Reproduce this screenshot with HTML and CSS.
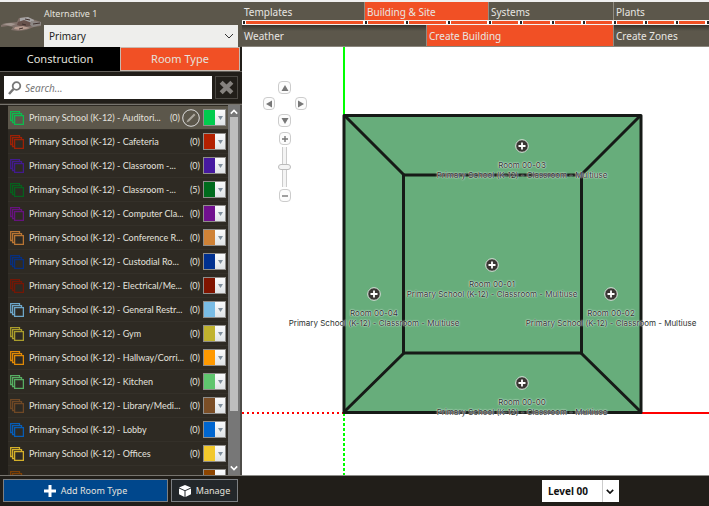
FILE: index.html
```
<!DOCTYPE html>
<html lang="en">
<head>
<meta charset="utf-8">
<title>Create Building</title>
<link rel="stylesheet" href="styles.css">
</head>
<body>
<svg width="0" height="0" class="defs" aria-hidden="true">
  <symbol id="stack" viewBox="0 0 14 14">
    <g fill="none" stroke="currentColor" stroke-width="1.300"><path d="M2.500 9.500H.7V.7h8.800v1.800"/><path d="M4.500 11.500H2.600V2.600h8.900v1.900"/><rect x="4.600" y="4.600" width="8.800" height="8.800"/></g>
  </symbol>
  <symbol id="chevron" viewBox="0 0 10 6"><path d="M1 1l4 4 4-4" fill="none" stroke="currentColor"/></symbol>
  <symbol id="add" viewBox="0 0 14 14"><circle cx="7" cy="7" r="6.300" fill="#3a3633" stroke="#dfe8e1" stroke-width="1"/><path d="M7 3.500v7M3.500 7h7" stroke="#fff" stroke-width="1.800"/></symbol>
</svg>
<aside class="sidebar">
  <header class="project">
    <svg class="thumb" viewBox="0 0 44 44" aria-hidden="true">
      <path d="M1 23l6-2 10-1 2-4 8-1 8 3 6 2v4l-7 1-8 3-8 1-7-1 2-3-5-1-7 1z" fill="#82726b"/>
      <path d="M20 16l8-1 6 3-1 3-13-1z" fill="#a6a4a4"/><path d="M18 20l6-2 8 3-1 3-8 1-6-2z" fill="#67514b"/>
      <path d="M15 25l8-1 7 2-9 2-7-1z" fill="#b89c90"/><path d="M2 22l9-1 5 1-5 2z" fill="#a39790"/>
      <path d="M31 19l10 1v3l-8 2-3-2z" fill="#8c8784"/><path d="M33 22l7-1M22 22l4 1M25 17l5 1M19 27l4-1" stroke="#3f302d"/>
    </svg>
    <div class="alt">
      <label for="alt">Alternative 1</label>
      <div class="pick"><select id="alt"><option>Primary</option></select><svg><use href="#chevron"/></svg></div>
    </div>
  </header>
  <div class="tabs">
    <button type="button">Construction</button>
    <button type="button" class="on">Room Type</button>
  </div>
  <form class="search">
    <div class="field">
      <svg viewBox="0 0 14 14" aria-hidden="true"><circle cx="8.500" cy="5" r="3.800" fill="none" stroke="#777" stroke-width="1.800"/><path d="M5.500 8L1 13" stroke="#777" stroke-width="2.500"/></svg>
      <input type="text" placeholder="Search..." aria-label="Search">
    </div>
    <button type="reset" aria-label="Clear"><svg viewBox="0 0 14 14"><path d="M2 2l10 10M12 2L2 12" stroke="#85827e" stroke-width="4"/></svg></button>
  </form>
  <div class="listwrap">
    <ul class="list" id="rooms"></ul>
    <div class="scroll" aria-hidden="true"><svg class="up"><use href="#chevron"/></svg><div class="bar"></div><svg><use href="#chevron"/></svg></div>
  </div>
  <footer class="actions">
    <button type="button" class="addtype"><svg viewBox="0 0 12 12"><path d="M6 0v12M0 6h12" stroke="#fff" stroke-width="3"/></svg>Add Room Type</button>
    <button type="button" class="manage"><svg viewBox="0 0 12 12"><path d="M6 0l6 2.500L6 5.300 0 2.500zM0 3.600l5.500 2.500V12L0 9.300zM12 3.600L6.500 6.100V12L12 9.300z" fill="#fff"/></svg>Manage</button>
  </footer>
</aside>
<main class="main">
  <nav class="nav top">
    <a href="#">Templates</a><a href="#" class="on">Building &amp; Site</a><a href="#">Systems</a><a href="#">Plants</a>
  </nav>
  <div class="rail" aria-hidden="true">
    <div><i></i></div><div><i></i><i></i><i></i></div><div><i></i><i></i><i></i><i></i></div><div><i></i><i></i><i></i><i></i></div>
  </div>
  <nav class="nav sub">
    <a href="#">Weather</a><a href="#" class="on">Create Building</a><a href="#">Create Zones</a>
  </nav>
  <section class="canvas">
    <svg class="plan" width="467" height="428" aria-hidden="true">
      <path d="M102 0V68" stroke="#0f0" stroke-width="2"/>
      <path d="M102 366V3000" stroke="#0f0" stroke-width="2" stroke-dasharray="3 2"/>
      <path d="M102 366H-1" stroke="red" stroke-width="2" stroke-dasharray="2 3"/>
      <path d="M399 366H3000" stroke="red" stroke-width="2"/>
      <rect x="102" y="68" width="297" height="297" fill="#67ad7b"/>
      <g fill="none" stroke="#161a17" stroke-width="3" stroke-linejoin="round"><rect x="102" y="68.500" width="297" height="297"/><rect x="161.500" y="128" width="178" height="178"/><path d="M102 68l60 60M399 68l-60 60M102 365l60-59M399 365l-60-59"/></g>
    </svg>
    <div class="room r3"><button type="button" aria-label="Edit room"><svg><use href="#add"/></svg></button><span>Room 00-03</span><span>Primary School (K-12) - Classroom - Multiuse</span></div>
    <div class="room r1"><button type="button" aria-label="Edit room"><svg><use href="#add"/></svg></button><span>Room 00-01</span><span>Primary School (K-12) - Classroom - Multiuse</span></div>
    <div class="room r4"><button type="button" aria-label="Edit room"><svg><use href="#add"/></svg></button><span>Room 00-04</span><span>Primary School (K-12) - Classroom - Multiuse</span></div>
    <div class="room r2"><button type="button" aria-label="Edit room"><svg><use href="#add"/></svg></button><span>Room 00-02</span><span>Primary School (K-12) - Classroom - Multiuse</span></div>
    <div class="room r0"><button type="button" aria-label="Edit room"><svg><use href="#add"/></svg></button><span>Room 00-00</span><span>Primary School (K-12) - Classroom - Multiuse</span></div>
    <div class="controls">
      <div class="pan">
        <button type="button" class="n" aria-label="Pan up"><svg viewBox="0 0 8 8"><path d="M4 1l3.500 6h-7z"/></svg></button>
        <button type="button" class="w" aria-label="Pan left"><svg viewBox="0 0 8 8"><path d="M1 4l6-3.500v7z"/></svg></button>
        <button type="button" class="e" aria-label="Pan right"><svg viewBox="0 0 8 8"><path d="M7 4L1 .5v7z"/></svg></button>
        <button type="button" class="s" aria-label="Pan down"><svg viewBox="0 0 8 8"><path d="M4 7l3.500-6h-7z"/></svg></button>
      </div>
      <button type="button" aria-label="Zoom in"><svg viewBox="0 0 8 8"><path d="M3.300 1h1.400v2.300H7v1.400H4.700V7H3.300V4.700H1V3.300h2.300z"/></svg></button>
      <input type="range" min="0" max="100" value="50" aria-label="Zoom">
      <button type="button" aria-label="Zoom out"><svg viewBox="0 0 8 8"><path d="M1 3.300h6v1.400H1z"/></svg></button>
    </div>
  </section>
  <footer class="status">
    <div class="level"><select aria-label="Level"><option>Level 00</option></select><svg viewBox="0 0 10 6"><path d="M1 1l4 4 4-4" fill="none" stroke="#111" stroke-width="2"/></svg></div>
  </footer>
</main>
<script src="rooms.js"></script>
</body>
</html>
```
FILE: rooms.js
```
const rooms = [
  ["Auditori...", 0, "#00cc4e"],
  ["Cafeteria", 0, "#b32000"],
  ["Classroom -...", 0, "#4619a0"],
  ["Classroom -...", 5, "#006b1d"],
  ["Computer Cla...", 0, "#70108e"],
  ["Conference R...", 0, "#cf8236"],
  ["Custodial Ro...", 0, "#003090"],
  ["Electrical/Me...", 0, "#801400"],
  ["General Restr...", 0, "#79bce5"],
  ["Gym", 0, "#c0b22e"],
  ["Hallway/Corri...", 0, "#ff9900"],
  ["Kitchen", 0, "#5fc56e"],
  ["Library/Medi...", 0, "#7b4e26"],
  ["Lobby", 0, "#0066d0"],
  ["Offices", 0, "#f2c82c"]
];
const pencil = '<button type="button" class="edit" aria-label="Edit"><svg viewBox="0 0 18 18"><circle cx="9" cy="9" r="8.300" fill="none" stroke="#ddd"/><path d="M4.500 13.500l1-2.500L12 4.500l1.500 1.500L7 12.500z" fill="#aaa69d"/></svg></button>';
const icon = '<svg class="stack"><use href="#stack"/></svg>';
const swatch = '<button type="button" class="swatch" aria-label="Colour"><i></i><b><svg viewBox="0 0 5 4"><path d="M0 0h5L2.500 4z"/></svg></b></button>';
document.getElementById("rooms").innerHTML = rooms.map(([name, count, color], i) =>
  `<li class="${i ? "" : "on"}" style="--c:${color}">${icon}<span class="name">Primary School (K-12) - ${name}</span><span>(${count})</span>${i ? "" : pencil}${swatch}</li>`
).join("") + `<li style="--c:#8d4500">${icon}<span class="name"></span>${swatch}</li>`;
```
FILE: styles.css
```
* { box-sizing: border-box; }
body {
  margin: 0;
  height: 100vh;
  padding-top: 2px;
  display: grid;
  grid-template-columns: 242px minmax(0, 1fr);
  background: #f0f0f0;
  color: #e4e2de;
  font: 10px/16px "Noto Sans", sans-serif;
  overflow: hidden;
}
button, input, select { font: inherit; color: inherit; margin: 0; padding: 0; border: 0; border-radius: 0; }
svg { display: block; flex: none; }
.defs { position: absolute; }

.sidebar { display: flex; flex-direction: column; min-height: 0; background: #211e19; }
.project { display: flex; height: 45px; background: #5c574b; }
.thumb { width: 44px; height: 44px; }
.alt { flex: 1; display: flex; flex-direction: column; padding-right: 4px; }
.alt label { height: 23px; line-height: 23px; font-size: 9px; }
.pick { position: relative; flex: 1; }
.pick select { appearance: none; width: 100%; height: 100%; padding-left: 5px; background: #eeeeec; color: #222; }
.pick svg { position: absolute; right: 4px; top: 8px; width: 10px; height: 6px; color: #333; }

.tabs { display: grid; grid-template-columns: 1fr 1fr; height: 25px; padding-right: 2px; border-bottom: 1px solid #625f5a; font-size: 11px; }
.tabs button { background: #000; }
.tabs .on { background: #f15025; border: 1px solid #c8b8ae; }

.search { display: flex; gap: 3px; height: 32px; padding: 4px; border-bottom: 1px solid #39352e; }
.field { flex: 1; display: flex; align-items: center; gap: 3px; padding: 0 4px; background: #fff; }
.field svg { width: 14px; height: 14px; }
.field input { flex: 1; min-width: 0; outline: 0; background: none; font-style: italic; color: #333; }
.field input::placeholder { color: #777; }
.search button { width: 23px; display: grid; place-items: center; background: #211e19; border: 1px solid #4b4843; }
.search button svg { width: 15px; height: 15px; }

.listwrap { flex: 1; min-height: 0; display: flex; border-top: 1px solid #77746e; padding-left: 8px; }
.list { flex: 1; min-width: 0; margin: 0; padding: 1px 0 0; list-style: none; overflow: hidden; font: 9px/16px Lato, sans-serif; background: #2e2a23; }
.list li { height: 24px; display: flex; align-items: center; padding: 0 2px; border-bottom: 1px solid #343029; white-space: nowrap; }
.list li.on { background: #5c574b; }
.stack { width: 14px; height: 14px; margin-right: 5px; color: var(--c); opacity: .85; }
.name { flex: 1; min-width: 0; }
.edit { width: 18px; height: 18px; margin-left: 2px; background: none; }
.edit + .swatch { margin-left: 3px; }
.swatch { display: flex; width: 23px; height: 17px; margin-left: 3px; border: 1px solid #8f8d8a; }
.swatch i { flex: 1; background: var(--c); }
.swatch b { width: 10px; height: 100%; display: grid; place-items: center; background: linear-gradient(#fafbfc, #dfe3e6); }
.swatch svg { width: 5px; height: 4px; fill: #7f8f9d; }
.scroll { width: 14px; display: flex; flex-direction: column; align-items: center; padding: 4px 2px; background: #777; color: #fff; border-right: 2px solid #4e4c48; }
.scroll svg { width: 8px; height: 6px; stroke-width: 2px; }
.scroll .up { transform: rotate(180deg); }
.scroll .bar { flex: 0 1 294px; width: 8px; margin: 2px 0 auto; background: #bdbdbd; }

.actions { display: flex; gap: 3px; height: 31px; padding: 3px 4px 4px 3px; border-top: 1px solid #77746e; font-size: 9px; }
.actions button { display: flex; align-items: center; justify-content: center; gap: 5px; border: 1px solid #7c7f82; }
.actions svg { width: 12px; height: 12px; }
.addtype { flex: 1; background: #00478c; }
.manage { width: 67px; background: #23272a; }

.main { display: flex; flex-direction: column; min-width: 0; min-height: 0; }
.nav { display: grid; background: #5c574b; }
.nav a { display: flex; align-items: center; padding-left: 2px; color: #e8e6e2; text-decoration: none; white-space: nowrap; }
.nav a + a { border-left: 1px solid #918c82; }
.top { height: 18px; }
.top, .rail { grid-template-columns: 122px 124px 125px minmax(96px, 124px); }
.top a { padding-top: 2px; }
.nav .on { background: #f15025; }
.rail { display: grid; height: 5px; background: #f4f1ef; overflow: hidden; }
.rail div { display: flex; }
.rail div:last-child { width: 124px; }
.rail i { flex: 1; height: 3px; margin-top: 1px; background: linear-gradient(90deg, #fff 0 1px, #222 1px 3px, #fff 3px 4px, #f15025 4px calc(100% - 1px), #fff 0); }
.sub { height: 22px; grid-template-columns: 184px 187px minmax(96px, 1fr); background: linear-gradient(#35322c, #5c574b 6px); border-bottom: 1px solid #8a867d; }
.sub a { padding-top: 1px; }

.canvas { position: relative; flex: 1; min-height: 0; overflow: hidden; background: #fff; }
.plan { overflow: visible; }
.room { position: absolute; width: 0; display: flex; flex-direction: column; align-items: center; font: 8px/10px Inter, sans-serif; color: #2e3330; white-space: nowrap; text-shadow: 0 0 2px #fff, 0 0 1px #fff; }
.room button { width: 14px; height: 14px; margin-bottom: 7px; background: none; }
.room button svg { width: 14px; height: 14px; }
.r3 { left: 280px; top: 92px; }
.r1 { left: 250px; top: 211px; }
.r4 { left: 132px; top: 240px; }
.r2 { left: 369px; top: 240px; }
.r0 { left: 280px; top: 329px; }

.controls { position: absolute; left: 21px; top: 34px; display: flex; flex-direction: column; align-items: center; }
.pan { display: grid; grid-template-columns: 11px 13px 11px; grid-template-rows: 12px 13px 12px; gap: 4px; margin-bottom: 6px; }
.n, .s { grid-column: 2; }
.w { grid-column: 1; grid-row: 2; }
.e { grid-column: 3; grid-row: 2; }
.s { grid-row: 3; }
.controls button { min-width: 12px; height: 13px; display: grid; place-items: center; background: #fcfcfc; border: 1px solid #ccc; border-radius: 4px; }
.controls button svg { width: 8px; height: 8px; fill: #777; }
.controls input { appearance: none; writing-mode: vertical-lr; width: 13px; height: 40px; margin: 2px 0; background: linear-gradient(90deg, transparent 4px, #ccc 4px 5px, #f4f4f4 5px 8px, #ccc 8px 9px, transparent 9px); }
.controls input::-webkit-slider-thumb { appearance: none; width: 13px; height: 6px; background: #f4f4f4; border: 1px solid #bbb; border-radius: 3px; }

.status { height: 31px; display: flex; justify-content: flex-end; padding: 4px 90px 4px 0; background: #211e19; border-top: 1px solid #8e8e8a; }
.level { position: relative; width: 77px; background: #fff; color: #111; }
.level select { appearance: none; width: 100%; height: 100%; padding-left: 6px; background: linear-gradient(#ccc, #ccc) 60px 0 / 1px 100% no-repeat #fff; font-weight: 700; }
.level svg { position: absolute; right: 5px; top: 9px; width: 8px; height: 5px; }
```
